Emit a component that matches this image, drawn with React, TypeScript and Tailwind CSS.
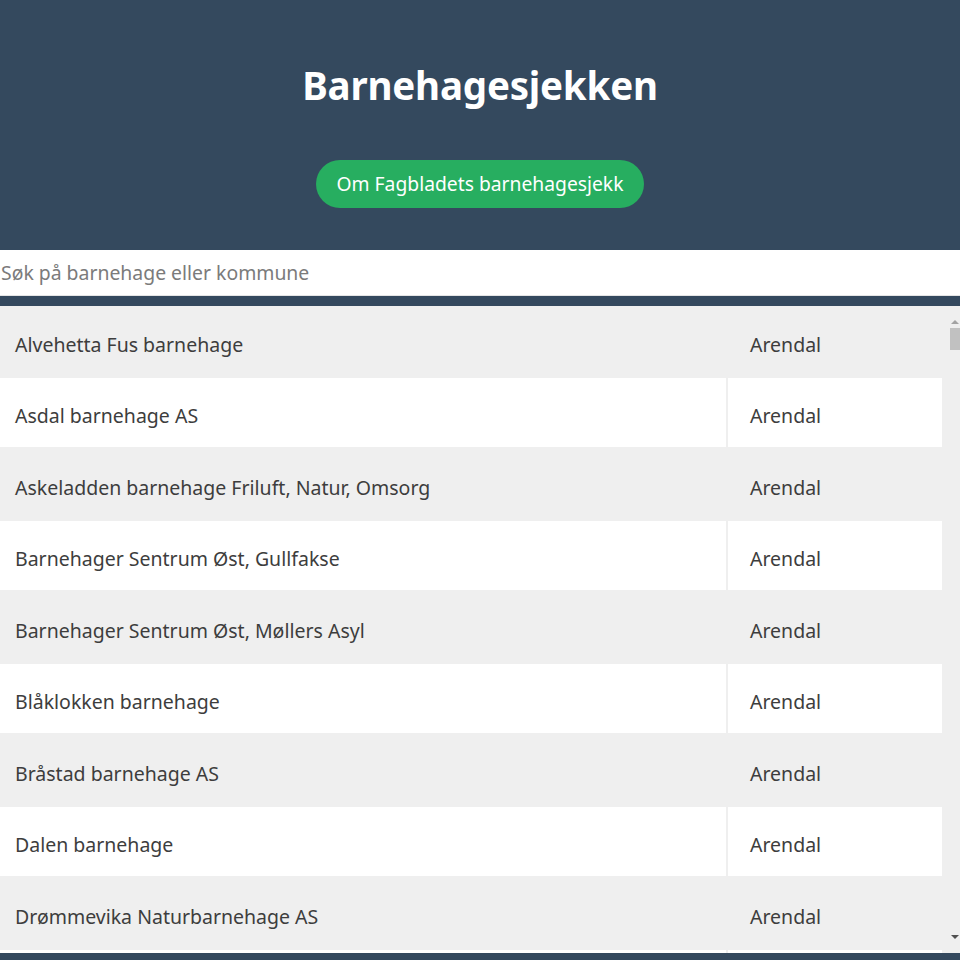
import React from "react";

const rows = [
  "Alvehetta Fus barnehage",
  "Asdal barnehage AS",
  "Askeladden barnehage Friluft, Natur, Omsorg",
  "Barnehager Sentrum Øst, Gullfakse",
  "Barnehager Sentrum Øst, Møllers Asyl",
  "Blåklokken barnehage",
  "Bråstad barnehage AS",
  "Dalen barnehage",
  "Drømmevika Naturbarnehage AS",
];

export default function App() {
  return (
    <div
      className="w-[960px] h-[960px] bg-[#34495e] flex flex-col overflow-hidden"
      style={{ fontFamily: '"Noto Sans", "Open Sans", sans-serif' }}
    >
      <div className="h-[250px] flex flex-col items-center shrink-0">
        <h1 className="mt-[57px] text-[38.5px] leading-[56px] font-bold text-white tracking-[-0.2px]">
          Barnehagesjekken
        </h1>
        <button className="mt-[47px] h-[48px] w-[328px] rounded-full bg-[#27ae60] text-white text-[19.3px] flex items-center justify-center">
          Om Fagbladets barnehagesjekk
        </button>
      </div>
      <div className="h-[46px] bg-white flex items-center shrink-0 border-b border-[#e5e5e5]">
        <span className="pl-[1px] text-[19.4px] text-[#7b7b7b]">Søk på barnehage eller kommune</span>
      </div>
      <div className="h-[10px] shrink-0" />
      <div className="h-[647px] bg-[#efefef] flex shrink-0 overflow-hidden">
        <div className="w-[942px] flex flex-col gap-[2px]">
          {rows.map((name, i) => (
            <div key={i} className="flex gap-[2px] h-[69.5px] shrink-0">
              <div
                className={`w-[726px] flex items-center pl-[15px] pt-[7px] text-[19.5px] text-[#3d3d3d] ${
                  i % 2 === 1 ? "bg-white" : "bg-[#efefef]"
                }`}
              >
                {name}
              </div>
              <div
                className={`w-[214px] flex items-center pl-[22px] pt-[7px] text-[19.5px] text-[#3d3d3d] ${
                  i % 2 === 1 ? "bg-white" : "bg-[#efefef]"
                }`}
              >
                Arendal
              </div>
            </div>
          ))}
          <div className="flex gap-[2px] h-[20px] shrink-0">
            <div className="w-[726px] bg-white" />
            <div className="w-[214px] bg-white" />
          </div>
        </div>
        <div className="flex-1 flex flex-col items-end">
          <div className="w-[10px] h-[22px] flex items-end justify-center pb-[4px]">
            <div className="w-0 h-0 border-l-[4px] border-r-[4px] border-b-[4px] border-l-transparent border-r-transparent border-b-[#a3a3a3]" />
          </div>
          <div className="w-[10px] h-[22px] bg-[#c1c1c1]" />
          <div className="flex-1" />
          <div className="w-[10px] h-[20px] flex items-start justify-center pt-[2px]">
            <div className="w-0 h-0 border-l-[4px] border-r-[4px] border-t-[4px] border-l-transparent border-r-transparent border-t-[#505050]" />
          </div>
        </div>
      </div>
    </div>
  );
}
